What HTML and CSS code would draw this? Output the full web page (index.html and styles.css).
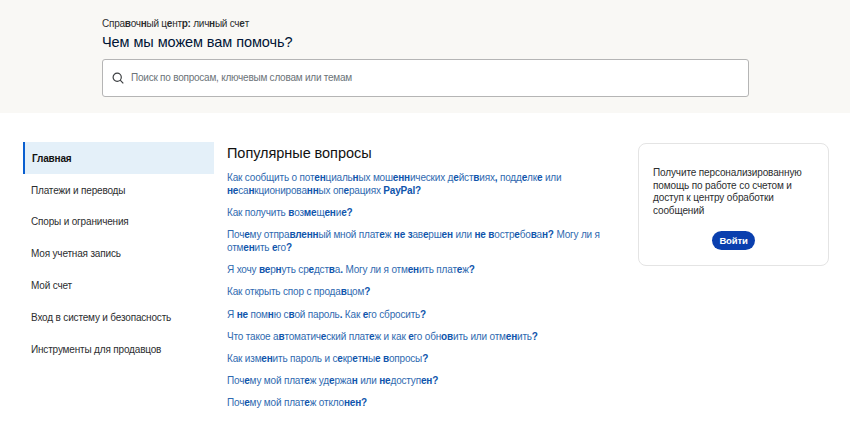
FILE: index.html
```html
<!DOCTYPE html>
<html lang="ru">
<head>
<meta charset="utf-8">
<title>Справочный центр</title>
<link rel="stylesheet" href="styles.css">
</head>
<body>
<header class="hero">
  <div class="hero-inner">
    <p class="crumb">Спра<b>в</b>оч<b>н</b>ый ц<b>е</b>нт<b>р:</b> лич<b>н</b>ый сч<b>е</b>т</p>
    <h1 class="title">Чем мы можем вам помочь?</h1>
    <div class="search">
      <svg class="search-icon" viewBox="0 0 12 12" width="12" height="12" aria-hidden="true"><circle cx="5.2" cy="5.2" r="4.1"/><path d="M8.2 8.2 11.3 11.3"/></svg>
      <span class="search-text">Поиск по вопросам, ключевым словам или темам</span>
    </div>
  </div>
</header>
<main class="content">
  <nav class="side">
    <a class="side-item active">Главная</a>
    <a class="side-item">Платежи и переводы</a>
    <a class="side-item">Споры и ограничения</a>
    <a class="side-item">Моя учетная запись</a>
    <a class="side-item">Мой счет</a>
    <a class="side-item">Вход в систему и безопасность</a>
    <a class="side-item">Инструменты для продавцов</a>
  </nav>
  <section class="faq">
    <h2 class="faq-title">Популярные вопросы</h2>
    <ul class="faq-list">
      <li>Как сообщить о пот<b>ен</b>циаль<b>н</b>ых мош<b>енн</b>ических д<b>е</b>йст<b>в</b>иях<b>,</b> подд<b>е</b>лк<b>е</b> или<br><b>не</b>са<b>н</b>кционирова<b>нн</b>ых оп<b>е</b>рациях <b>PayPal?</b></li>
      <li>Как получить <b>в</b>оз<b>м</b><b>е</b>щ<b>ен</b>и<b>е?</b></li>
      <li>Поч<b>е</b>му отпра<b>вленн</b>ый мной плат<b>е</b>ж <b>не</b> <b>з</b>ав<b>е</b>рш<b>ен</b> или <b>не</b> <b>в</b>остр<b>е</b>бо<b>в</b>а<b>н?</b> Могу ли я<br>отм<b>ен</b>ить <b>е</b>го<b>?</b></li>
      <li>Я хочу <b>в</b><b>е</b>р<b>н</b>уть ср<b>е</b>дст<b>в</b>а<b>.</b> Могу ли я отм<b>ен</b>ить плат<b>е</b>ж<b>?</b></li>
      <li>Как открыть спор с прода<b>в</b>цом<b>?</b></li>
      <li>Я <b>не</b> пом<b>н</b>ю с<b>в</b>ой пароль<b>.</b> Как <b>е</b>го сбросить<b>?</b></li>
      <li>Что такое а<b>в</b>томатич<b>е</b>ский плат<b>е</b>ж и как <b>е</b>го обн<b>о</b><b>в</b>ить или отм<b>ен</b>ить<b>?</b></li>
      <li>Как изм<b>ен</b>ить пароль и с<b>е</b>кр<b>е</b>т<b>н</b>ы<b>е</b> <b>в</b>опросы<b>?</b></li>
      <li>Поч<b>е</b>му мой плат<b>е</b>ж уд<b>е</b>ржа<b>н</b> или <b>не</b>доступ<b>ен?</b></li>
      <li>Поч<b>е</b>му мой плат<b>е</b>ж откло<b>нен?</b></li>
    </ul>
  </section>
  <aside class="card">
    <p class="card-text">Получите персонализированную помощь по работе со счетом и доступ к центру обработки сообщений</p>
    <a class="login">Войти</a>
  </aside>
</main>
</body>
</html>
```
FILE: styles.css
```css
* { box-sizing: border-box; }
html, body { margin: 0; padding: 0; }
body {
  width: 850px;
  height: 438px;
  overflow: hidden;
  background: #fff;
  font-family: "Liberation Sans", sans-serif;
  color: #2c2e2f;
}
.hero {
  height: 113px;
  background: #f9f8f5;
  padding: 17px 101px 0 102px;
}
.crumb {
  margin: 0;
  font-size: 10px;
  letter-spacing: -0.25px;
  line-height: 14px;
  color: #2c2e2f;
}
.crumb b, .faq-list b { font-weight: 700; }
.title {
  margin: 2px 0 0;
  font-size: 14.5px;
  letter-spacing: -0.07px;
  line-height: 18px;
  font-weight: 400;
  color: #001435;
}
.search {
  margin-top: 8px;
  height: 38px;
  background: #fff;
  border: 1px solid #b5b5b5;
  border-radius: 3px;
  display: flex;
  align-items: center;
  padding-left: 9px;
  gap: 7px;
}
.search-icon { fill: none; stroke: #3c3f42; stroke-width: 1.2; }
.search-text { font-size: 10px; letter-spacing: -0.23px; color: #6c7378; padding-bottom: 2px; }
.content {
  display: flex;
  align-items: flex-start;
  padding: 29px 0 0 23px;
}
.side { width: 191px; display: flex; flex-direction: column; }
.side-item {
  height: 31.8px;
  display: flex;
  align-items: center;
  padding: 1px 0 0 8px;
  font-size: 10px;
  letter-spacing: -0.17px;
  color: #2c2e2f;
}
.side-item.active {
  background: #e4f0f9;
  border-left: 2px solid #0a5fd0;
  padding-left: 7px;
  font-weight: 700;
  color: #111;
}
.faq { width: 390px; margin-left: 13px; }
.faq-title {
  margin: 2px 0 0;
  font-size: 14.5px;
  letter-spacing: -0.05px;
  line-height: 18px;
  font-weight: 400;
  color: #111;
}
.faq-list {
  list-style: none;
  margin: 8.7px 0 0;
  padding: 0;
  display: flex;
  flex-direction: column;
  gap: 8.9px;
  font-size: 10px;
  letter-spacing: -0.18px;
  line-height: 13.2px;
  color: #2f6ab0;
}
.faq-list b { color: #0f55ac; }
.card {
  width: 191px;
  height: 123px;
  margin: 1px 0 0 21px;
  border: 1px solid #e4e4e4;
  border-radius: 8px;
  padding: 23px 14px 0;
  display: flex;
  flex-direction: column;
}
.card-text {
  margin: 0;
  font-size: 10px;
  letter-spacing: -0.13px;
  line-height: 12.7px;
  color: #2c2e2f;
}
.login {
  align-self: center;
  margin-top: 13px;
  width: 43px;
  height: 19px;
  border-radius: 10px;
  background: #0a3fae;
  color: #fff;
  font-size: 9.5px;
  letter-spacing: -0.15px;
  font-weight: 700;
  display: flex;
  align-items: center;
  justify-content: center;
}
```
